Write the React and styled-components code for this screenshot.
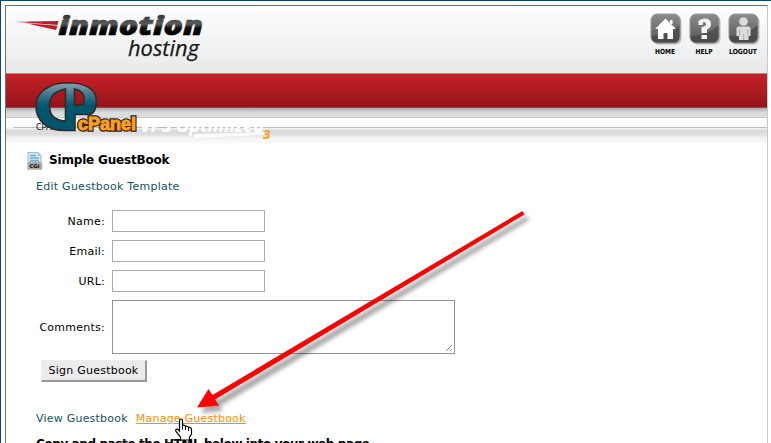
import React from "react";
import styled, { createGlobalStyle } from "styled-components";

const GlobalStyle = createGlobalStyle`
  * { box-sizing: border-box; }
  body { margin: 0; background: #fff; overflow: hidden; }
`;
const Page = styled.div`
  position: relative;
  width: 771px;
  height: 443px;
  overflow: hidden;
  padding: 4px 3px 0 4px;
  border-top: 1px solid #0c4767;
  border-left: 1px solid #0c4a74;
  background: #fff;
  font: 11px/14px Verdana, "DejaVu Sans", sans-serif;
  color: #000;
`;
const Frame = styled.div`
  height: 450px;
  border: 1px solid #c9c9c9;
  border-top-color: #707070;
  border-left-color: #707070;
  background: #fff;
`;
const Header = styled.header`
  display: flex;
  justify-content: space-between;
  height: 67px;
  background: linear-gradient(#fefefe, #e8eaea);
`;
const Brand = styled.svg`
  display: block;
  width: 220px;
  height: 67px;
`;
const Tools = styled.nav`
  display: flex;
  gap: 7px;
  padding: 7px 7px 0 0;
`;
const Tool = styled.a`
  display: block;
  width: 32px;
  height: 44px;
  svg { display: block; overflow: visible; }
`;
const RedBar = styled.div`
  height: 35px;
  border-top: 1px solid #df7778;
  border-bottom: 1px solid #795052;
  background: linear-gradient(#c52228, #951419);
`;
const GreyBar = styled.div`
  height: 10px;
  border-bottom: 1px solid #c4cacd;
  background: linear-gradient(#a9adaf, #d7dadb 50%, #dedfe1);
`;
const CrumbBar = styled.div`
  height: 27px;
  padding-left: 6px;
  background: linear-gradient(#fff 0, #fafafa 9px, #f2f2f2 10px, #d9d9d9 13px, #dddddd 16px, #f1f1f1 20px, #fff 27px);
`;
const CrumbLine = styled.div`
  height: 20px;
  padding-left: 24px;
  background: linear-gradient(#bbb, #bbb) 2px 9px / 100% 1px no-repeat;
  font: 8px/20px "DejaVu Sans", sans-serif;
`;
const CpanelLogo = styled.svg`
  position: absolute;
  left: 29px;
  top: 74px;
`;
const Content = styled.main`
  padding: 5px 0 0 21px;
`;
const Title = styled.h1`
  display: flex;
  align-items: center;
  gap: 5px;
  height: 20px;
  margin: 0;
  font: bold 12px/16px Verdana, "DejaVu Sans", sans-serif;
  svg { position: relative; top: 1px; }
  span { width: 120px; letter-spacing: -0.18px; white-space: nowrap; }
`;
const Links = styled.div`
  display: flex;
  gap: 8px;
  padding-left: 9px;
  margin-top: ${(p) => p.$top}px;
  height: 14px;
`;
const Link = styled.a`
  color: ${(p) => (p.$active ? "#ef940f" : "#155263")};
  text-decoration: ${(p) => (p.$active ? "underline" : "none")};
  letter-spacing: ${(p) => p.$track || 0.22}px;
  white-space: nowrap;
`;
const Form = styled.form`
  display: grid;
  grid-template-columns: 78px 343px;
  grid-auto-rows: 22px;
  column-gap: 7px;
  row-gap: 8px;
  margin-top: 16px;
`;
const Label = styled.label`
  align-self: center;
  padding-top: 1px;
  text-align: right;
  letter-spacing: 0.25px;
`;
const Input = styled.input`
  width: 153px;
  height: 22px;
  padding: 2px;
  border: 1px solid #a9a9b0;
  border-radius: 0;
  outline: none;
`;
const CommentsRow = styled.div`
  display: grid;
  grid-template-columns: 78px 343px;
  column-gap: 7px;
  margin-top: 8px;
`;
const Area = styled.div`
  display: flex;
  align-items: flex-end;
  justify-content: flex-end;
  height: 54px;
  padding: 1px;
  border: 1px solid #949494;
`;
const Submit = styled.button`
  display: block;
  width: 106px;
  height: 22px;
  margin: 6px 0 0 14px;
  padding: 1px 0 0;
  border: 0 solid #999;
  border-width: 1px 2px 2px 1px;
  border-top-color: #eee;
  border-left-color: #eee;
  background: #ebebeb;
  color: #000;
  font: 11px/18px Verdana, "DejaVu Sans", sans-serif;
  letter-spacing: 0.24px;
`;
const Note = styled.p`
  margin: 10px 0 0 9px;
  font: bold 12px/16px Verdana, "DejaVu Sans", sans-serif;
  letter-spacing: -0.4px;
  white-space: nowrap;
`;
const Overlay = styled.svg`
  position: absolute;
  left: -1px;
  top: -1px;
  pointer-events: none;
`;

function ToolButton({ name, width, children }) {
  return (
    <Tool>
      <svg width="32" height="44" viewBox="0 0 32 44">
        <rect x="2.5" y="2.5" width="29" height="29" rx="6" fill="#bbb" />
        <rect x="1" y="1" width="29" height="29" rx="6" fill="url(#toolFill)" stroke="#999" strokeWidth="1" />
        <path d="M1.5 23Q19 23 29.5 12V24Q29 29.5 24 29.5H7Q2 29 1.5 24Z" fill="#444" opacity=".65" />
        {children}
        <text x="15" y="41" textAnchor="middle" fontFamily="DejaVu Sans" fontWeight="bold" fontSize="7" textLength={width} lengthAdjust="spacingAndGlyphs">{name}</text>
      </svg>
    </Tool>
  );
}

function InmotionLogo() {
  return (
    <Brand viewBox="6 6 220 67">
      <defs>
        <linearGradient id="brandFill" x1="0" y1="15" x2="0" y2="35" gradientUnits="userSpaceOnUse">
          <stop offset="0" stopColor="#333" />
          <stop offset=".45" stopColor="#5a5a5a" />
          <stop offset=".65" stopColor="#111" />
          <stop offset="1" stopColor="#000" />
        </linearGradient>
        <linearGradient id="redFade">
          <stop offset="0" stopColor="#e58284" />
          <stop offset=".4" stopColor="#bd1f28" />
          <stop offset="1" stopColor="#b4202a" />
        </linearGradient>
        <linearGradient id="toolFill" x1="0" y1="0" x2="0" y2="1">
          <stop offset="0" stopColor="#8c8c8c" />
          <stop offset="1" stopColor="#555" />
        </linearGradient>
      </defs>
      <path d="M14 21.800L58.500 21L57.500 25ZM26 23.300L57.500 25.700L56 30Z" fill="url(#redFade)" />
      <text x="58.500" y="35" fill="url(#brandFill)" stroke="url(#brandFill)" strokeWidth=".7" fontFamily="Open Sans" fontWeight="800" fontStyle="italic" fontSize="26" textLength="144.500" lengthAdjust="spacingAndGlyphs">inmotion</text>
      <text x="128" y="56" fill="#181818" stroke="#181818" strokeWidth=".25" fontFamily="Open Sans" fontStyle="italic" fontSize="22.500" textLength="71" lengthAdjust="spacingAndGlyphs">hosting</text>
    </Brand>
  );
}

function Cpanel() {
  return (
    <CpanelLogo width="250" height="72" viewBox="30 75 250 72">
      <defs>
        <linearGradient id="teal" x1="0" y1="82" x2="0" y2="131" gradientUnits="userSpaceOnUse">
          <stop offset="0" stopColor="#8aa4b3" />
          <stop offset=".25" stopColor="#42788b" />
          <stop offset=".48" stopColor="#00566b" />
          <stop offset="1" stopColor="#00566b" />
        </linearGradient>
      </defs>
      <path fillRule="evenodd" d="M67 82.800C48 83.300 36 93 36 106C36 121 47 130.500 65 130.500H75V114.500H89C94.500 114.500 96.500 107 96.500 101C96.500 89 85 82.800 67 82.800ZM65.500 89C54 91 49.500 98 49.500 106C49.500 115 55 120.500 65.500 121ZM74.500 89V105H81.500C83.500 105 84 102 84 99C84 93 80 90 74.500 89Z" fill="url(#teal)" stroke="#33292a" strokeWidth="1.600" />
      <text x="78" y="130" fill="#f9a01b" stroke="#332519" strokeWidth="3.500" paintOrder="stroke" fontFamily="Liberation Sans" fontWeight="bold" fontSize="17.500" textLength="58" lengthAdjust="spacingAndGlyphs">cPanel</text>
      <text x="78" y="130" fill="#f9a01b" stroke="#f9a01b" strokeWidth=".9" fontFamily="Liberation Sans" fontWeight="bold" fontSize="17.500" textLength="58" lengthAdjust="spacingAndGlyphs">cPanel</text>
      <text x="140" y="132" fill="#fff" fontFamily="Open Sans" fontWeight="bold" fontStyle="italic" fontSize="18" textLength="124" lengthAdjust="spacingAndGlyphs">VPS Optimized</text>
      <path d="M194 134L264 132V135L194 138Z" fill="#fff" opacity=".85" />
      <text x="263" y="139" fill="#f6a331" fontFamily="Open Sans" fontWeight="800" fontStyle="italic" fontSize="13">3</text>
    </CpanelLogo>
  );
}

function DocIcon() {
  return (
    <svg width="17" height="20" viewBox="0 0 17 20">
      <path d="M1 1.500H11L14 4.500V13H1Z" fill="#d3ecfa" stroke="#9abdd0" />
      <path d="M11 1.500V4.500H14" fill="#7eb8da" />
      <path d="M3 4.500H9M3 7H12M3 9.500H12" stroke="#6faccc" strokeWidth="1.300" />
      <path d="M.5 12L2 10.500H13L15 12.500V18.500H.5Z" fill="#aaa" stroke="#bbb" strokeWidth=".6" />
      <text x="2.500" y="17" fontFamily="DejaVu Sans" fontWeight="bold" fontSize="5" textLength="10" lengthAdjust="spacingAndGlyphs">CGI</text>
    </svg>
  );
}

function Annotation() {
  return (
    <Overlay width="771" height="443" viewBox="0 0 771 443">
      <defs>
        <filter id="softShadow" x="-10%" y="-10%" width="125%" height="125%">
          <feGaussianBlur stdDeviation="1.900" />
        </filter>
      </defs>
      <path d="M522.500 211L525 215L216 401L219 406L197 408L209 389L213 395Z" fill="#000" opacity=".35" transform="translate(4 5)" filter="url(#softShadow)" />
      <path d="M522.500 211L524.500 214.500L215 399.500L219 405.500L197 407.500L208.500 389L212.500 395Z" fill="#fe0000" />
      <path d="M179.500 420.500Q179.500 419 181 419Q182.500 419 182.500 420.500V425.500Q184.500 424.500 185.500 426.500Q187.500 425.500 188.500 427.500Q191.500 427 191.500 430V434L189.500 437V440H180.500V437L176 431.500Q175 429 177.500 429L179.500 431Z" fill="#fff" stroke="#000" strokeWidth="1.200" />
      <path d="M182.500 425V429.500M185.500 426.500V430M188.500 427.500V431" stroke="#000" strokeWidth=".9" />
    </Overlay>
  );
}

export default function App() {
  return (
    <>
      <GlobalStyle />
      <Page>
        <Frame>
          <Header>
            <InmotionLogo />
            <Tools>
              <ToolButton name="HOME" width={20}>
                <path d="M15.500 5.500L26 16H23V26H17.500V20H13.500V26H8V16H5ZM20 7H22.500V11H20Z" fill="#fff" />
              </ToolButton>
              <ToolButton name="HELP" width={17}>
                <path d="M9.500 12V8Q12 5.500 15.500 5.500Q22 5.500 22 11Q22 15 18 16.500V20H12.500V14Q17 13.500 17 11Q17 9 15 9Q13.500 9 13.500 12ZM12.500 22H18V26H12.500Z" fill="#f4f4f4" />
              </ToolButton>
              <ToolButton name="LOGOUT" width={28}>
                <circle cx="15.500" cy="8.500" r="4.300" fill="#ddd" />
                <path d="M8.500 15Q9 13.500 11 13.500H20Q22.500 13.500 22.500 16V23H20.500V27H11V23H8.500Z" fill="#ddd" />
                <path d="M11.500 16.500V22.500M19.800 16.500V22.500M15.700 21V27" stroke="#999" strokeWidth=".8" />
              </ToolButton>
            </Tools>
          </Header>
          <RedBar />
          <GreyBar />
          <CrumbBar><CrumbLine>CPANEL</CrumbLine></CrumbBar>
          <Content>
            <Title><DocIcon /><span>Simple GuestBook</span></Title>
            <Links $top={10}><Link $track={0.26}>Edit Guestbook Template</Link></Links>
            <Form>
              <Label>Name:</Label><Input />
              <Label>Email:</Label><Input />
              <Label>URL:</Label><Input />
            </Form>
            <CommentsRow>
              <Label>Comments:</Label>
              <Area>
                <svg width="8" height="8" viewBox="0 0 8 8"><path d="M1 7L7 1M5 7L7 5" stroke="#777" strokeWidth=".8" /></svg>
              </Area>
            </CommentsRow>
            <Submit>Sign Guestbook</Submit>
            <Links $top={30}><Link>View Guestbook</Link><Link $active>Manage Guestbook</Link></Links>
            <Note>Copy and paste the HTML below into your web page.</Note>
          </Content>
        </Frame>
        <Cpanel />
        <Annotation />
      </Page>
    </>
  );
}
